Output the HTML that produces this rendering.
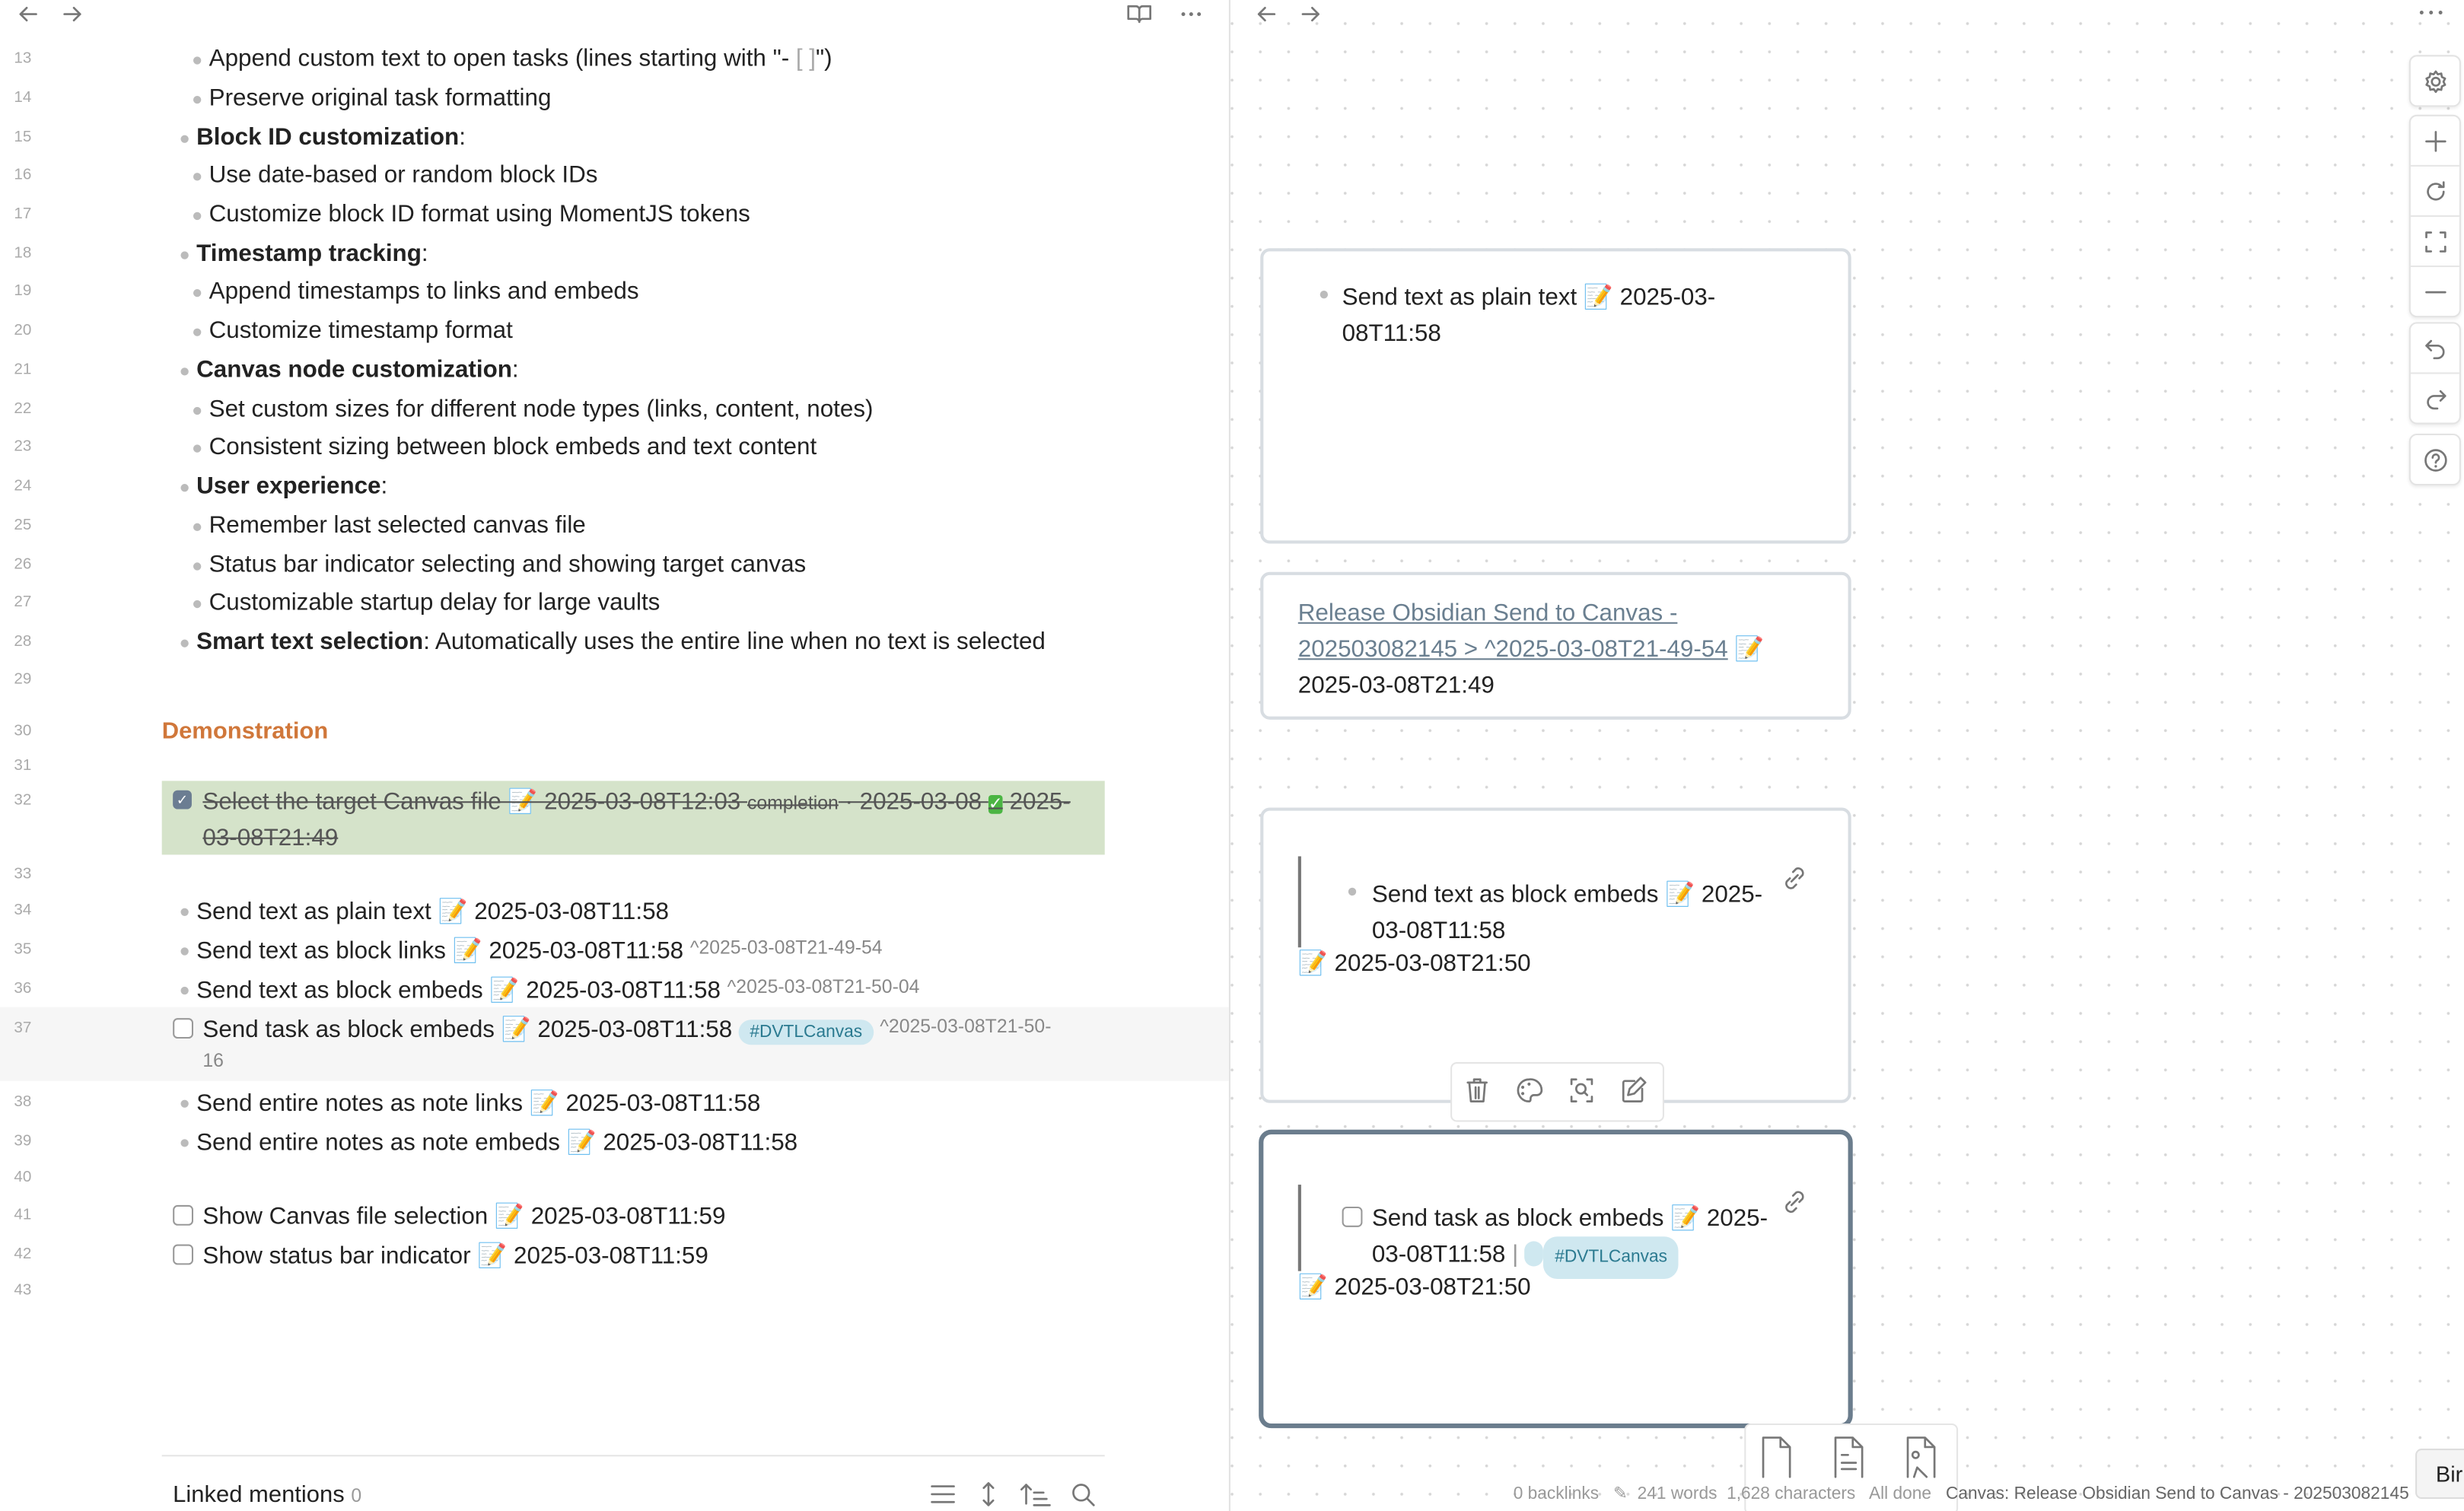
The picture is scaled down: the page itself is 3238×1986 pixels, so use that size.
<!DOCTYPE html>
<html><head><meta charset="utf-8"><style>
html,body{margin:0;padding:0;width:3238px;height:1986px;overflow:hidden;background:#fff}
#s{width:1568px;height:962px;transform:scale(2.0651);transform-origin:0 0;position:relative;font-family:"Liberation Sans",sans-serif;color:#222}
.ab{position:absolute}
.ln{position:absolute;left:0;width:20px;text-align:right;font-size:10px;color:#aaa}
.t{position:absolute;font-size:15.2px;white-space:nowrap;margin-top:1px}
.b{position:absolute;width:5px;height:5px;border-radius:50%;background:#bbb;margin-top:1px}
.cb{position:absolute;width:11px;height:11px;border:1px solid #999;border-radius:3px;background:#fff}
.ic{stroke:#777;fill:none;stroke-width:1.3;stroke-linecap:round;stroke-linejoin:round}
.card{position:absolute;background:#fff;border:2px solid #d8dde2;border-radius:6px;box-sizing:border-box}
.tag{display:inline-block;background:#cfe8f0;color:#2b7a90;border-radius:9px;font-size:11px;padding:2px 7px}
.sm{color:#888;font-size:12px}
.tb{position:absolute;left:1533px;width:31px;background:#fff;border:1px solid #e3e3e3;border-radius:5px;box-shadow:0 1px 2px rgba(0,0,0,.08)}
.tb div{height:31px;border-bottom:1px solid #e6e6e6;display:flex;align-items:center;justify-content:center}
.tb div:last-child{border-bottom:none}
</style></head><body><div id="s">
<div class="ab" style="left:0;top:0;width:782px;height:962px;background:#fff"></div>
<div class="ab" style="left:782px;top:0;width:1px;height:962px;background:#e2e2e2"></div>
<svg class="ab" style="left:10px;top:2px" width="44" height="14"><path class="ic" d="M13 7H3M7 3L3 7l4 4"/><path class="ic" d="M31 7h10M37 3l4 4-4 4" stroke="#bbb"/></svg>
<svg class="ab" style="left:716px;top:1px" width="60" height="15"><path class="ic" d="M2 3h5c1 0 2 1 2 2v8c0-1-1-2-2-2H2zM16 3h-5c-1 0-2 1-2 2v8c0-1 1-2 2-2h5z"/><circle cx="37" cy="8" r="1.2" fill="#777"/><circle cx="42" cy="8" r="1.2" fill="#777"/><circle cx="47" cy="8" r="1.2" fill="#777"/></svg>

<div class="ln" style="top:32px">13</div><div class="b" style="left:123px;top:35px"></div><div class="t" style="left:133px;top:28px">Append custom text to open tasks (lines starting with "- <span style="color:#aaa">[ ]</span>")</div>
<div class="ln" style="top:57px">14</div><div class="b" style="left:123px;top:60px"></div><div class="t" style="left:133px;top:53px">Preserve original task formatting</div>
<div class="ln" style="top:82px">15</div><div class="b" style="left:115px;top:85px"></div><div class="t" style="left:125px;top:78px"><b>Block ID customization</b>:</div>
<div class="ln" style="top:106px">16</div><div class="b" style="left:123px;top:109px"></div><div class="t" style="left:133px;top:102px">Use date-based or random block IDs</div>
<div class="ln" style="top:131px">17</div><div class="b" style="left:123px;top:134px"></div><div class="t" style="left:133px;top:127px">Customize block ID format using MomentJS tokens</div>
<div class="ln" style="top:156px">18</div><div class="b" style="left:115px;top:159px"></div><div class="t" style="left:125px;top:152px"><b>Timestamp tracking</b>:</div>
<div class="ln" style="top:180px">19</div><div class="b" style="left:123px;top:183px"></div><div class="t" style="left:133px;top:176px">Append timestamps to links and embeds</div>
<div class="ln" style="top:205px">20</div><div class="b" style="left:123px;top:208px"></div><div class="t" style="left:133px;top:201px">Customize timestamp format</div>
<div class="ln" style="top:230px">21</div><div class="b" style="left:115px;top:233px"></div><div class="t" style="left:125px;top:226px"><b>Canvas node customization</b>:</div>
<div class="ln" style="top:255px">22</div><div class="b" style="left:123px;top:258px"></div><div class="t" style="left:133px;top:251px">Set custom sizes for different node types (links, content, notes)</div>
<div class="ln" style="top:279px">23</div><div class="b" style="left:123px;top:282px"></div><div class="t" style="left:133px;top:275px">Consistent sizing between block embeds and text content</div>
<div class="ln" style="top:304px">24</div><div class="b" style="left:115px;top:307px"></div><div class="t" style="left:125px;top:300px"><b>User experience</b>:</div>
<div class="ln" style="top:329px">25</div><div class="b" style="left:123px;top:332px"></div><div class="t" style="left:133px;top:325px">Remember last selected canvas file</div>
<div class="ln" style="top:354px">26</div><div class="b" style="left:123px;top:357px"></div><div class="t" style="left:133px;top:350px">Status bar indicator selecting and showing target canvas</div>
<div class="ln" style="top:378px">27</div><div class="b" style="left:123px;top:381px"></div><div class="t" style="left:133px;top:374px">Customizable startup delay for large vaults</div>
<div class="ln" style="top:403px">28</div><div class="b" style="left:115px;top:406px"></div><div class="t" style="left:125px;top:399px"><b>Smart text selection</b>: Automatically uses the entire line when no text is selected</div>
<div class="ln" style="top:427px">29</div>
<div class="ln" style="top:460px">30</div><div class="t" style="left:103px;top:456px;color:#d0773a;font-weight:bold;font-size:15px">Demonstration</div>
<div class="ln" style="top:482px">31</div>
<div class="ln" style="top:504px">32</div>
<div class="ab" style="left:103px;top:497px;width:600px;height:47px;background:#d5e3ca"></div>
<div class="ab" style="left:110px;top:503px;width:12px;height:12px;border-radius:3px;background:#6b7d92;color:#fff;font-size:9px;text-align:center;line-height:12px">✓</div>
<div class="t" style="left:129px;top:499px;color:#555;text-decoration:line-through;line-height:22px;white-space:normal;width:574px">Select the target Canvas file 📝 2025-03-08T12:03 <span style="font-size:12px">completion</span> · 2025-03-08 <span style="background:#4bb543;color:#fff;border-radius:2px;font-size:11px">✓</span> 2025-03-08T21:49</div>
<div class="ln" style="top:551px">33</div>
<div class="ln" style="top:574px">34</div><div class="b" style="left:115px;top:577px"></div><div class="t" style="left:125px;top:570px">Send text as plain text 📝 2025-03-08T11:58</div>
<div class="ln" style="top:599px">35</div><div class="b" style="left:115px;top:602px"></div><div class="t" style="left:125px;top:595px">Send text as block links 📝 2025-03-08T11:58 <span class="sm" style="vertical-align:3px">^2025-03-08T21-49-54</span></div>
<div class="ln" style="top:624px">36</div><div class="b" style="left:115px;top:627px"></div><div class="t" style="left:125px;top:620px">Send text as block embeds 📝 2025-03-08T11:58 <span class="sm" style="vertical-align:3px">^2025-03-08T21-50-04</span></div>
<div class="ab" style="left:0;top:641px;width:782px;height:47px;background:#f6f6f6"></div>
<div class="ln" style="top:649px">37</div><div class="cb" style="left:110px;top:648px"></div><div class="t" style="left:129px;top:645px">Send task as block embeds 📝 2025-03-08T11:58 <span class="tag">#DVTLCanvas</span> <span class="sm" style="vertical-align:3px">^2025-03-08T21-50-</span></div>
<div class="t sm" style="left:129px;top:667px">16</div>
<div class="ln" style="top:696px">38</div><div class="b" style="left:115px;top:699px"></div><div class="t" style="left:125px;top:692px">Send entire notes as note links 📝 2025-03-08T11:58</div>
<div class="ln" style="top:721px">39</div><div class="b" style="left:115px;top:724px"></div><div class="t" style="left:125px;top:717px">Send entire notes as note embeds 📝 2025-03-08T11:58</div>
<div class="ln" style="top:744px">40</div>
<div class="ln" style="top:768px">41</div><div class="cb" style="left:110px;top:767px"></div><div class="t" style="left:129px;top:764px">Show Canvas file selection 📝 2025-03-08T11:59</div>
<div class="ln" style="top:793px">42</div><div class="cb" style="left:110px;top:792px"></div><div class="t" style="left:129px;top:789px">Show status bar indicator 📝 2025-03-08T11:59</div>
<div class="ln" style="top:816px">43</div>
<div class="ab" style="left:103px;top:926px;width:600px;height:1px;background:#e5e5e5"></div>
<div class="t" style="left:110px;top:942px;font-size:15px">Linked mentions <span style="color:#999;font-size:12px">0</span></div>
<svg class="ab" style="left:590px;top:942px" width="110" height="18"><path class="ic" d="M3 4h14M3 9h14M3 14h14"/><path class="ic" d="M39 2v14M36 5l3-3 3 3M36 13l3 3 3-3"/><path class="ic" d="M63 3v12M60 6l3-3 3 3M68 8h6M68 12h8M68 16h10"/><circle class="ic" cx="98" cy="8" r="5"/><path class="ic" d="M102 12l4 4"/></svg>

<div class="ab" style="left:783px;top:0;width:785px;height:962px;background-color:#fff;background-image:radial-gradient(circle,#d6d6d6 0.7px,transparent 1.1px);background-size:18px 18px;background-position:10px 6px"></div>
<svg class="ab" style="left:798px;top:2px" width="44" height="14"><path class="ic" d="M13 7H3M7 3L3 7l4 4" stroke="#bbb"/><path class="ic" d="M31 7h10M37 3l4 4-4 4" stroke="#bbb"/></svg>
<svg class="ab" style="left:1538px;top:2px" width="20" height="12"><circle cx="3" cy="6" r="1.2" fill="#777"/><circle cx="9" cy="6" r="1.2" fill="#777"/><circle cx="15" cy="6" r="1.2" fill="#777"/></svg>

<div class="card" style="left:802px;top:158px;width:376px;height:188px"></div>
<div class="b" style="left:840px;top:184px"></div>
<div class="t" style="left:854px;top:177px;line-height:23px;white-space:normal;width:300px">Send text as plain text 📝 2025-03-<br>08T11:58</div>

<div class="card" style="left:802px;top:364px;width:376px;height:94px"></div>
<div class="t" style="left:826px;top:378px;line-height:23px;white-space:normal;width:340px"><span style="color:#6a7f90;text-decoration:underline">Release Obsidian Send to Canvas -<br>202503082145 &gt; ^2025-03-08T21-49-54</span> 📝<br>2025-03-08T21:49</div>

<div class="card" style="left:802px;top:514px;width:376px;height:188px"></div>
<div class="ab" style="left:826px;top:545px;width:2px;height:58px;background:#777"></div>
<div class="b" style="left:858px;top:564px"></div>
<div class="t" style="left:873px;top:557px;line-height:23px;white-space:normal;width:260px">Send text as block embeds 📝 2025-<br>03-08T11:58</div>
<div class="t" style="left:826px;top:603px">📝 2025-03-08T21:50</div>
<svg class="ab" style="left:1134px;top:551px" width="16" height="16"><path class="ic" stroke="#bbb" d="M6 10l4-4M7 4l2-2a3 3 0 014 4l-2 2M9 12l-2 2a3 3 0 01-4-4l2-2"/></svg>
<div class="ab" style="left:923px;top:676px;width:134px;height:36px;background:#fff;border:1px solid #e5e5e5;border-radius:4px"></div>
<svg class="ab" style="left:930px;top:684px" width="120" height="20"><path class="ic" d="M4 5h12M8 5V3h4v2M5 5l1 12h8l1-12M9 8v7M11 8v7"/><path class="ic" d="M43 3a7 7 0 100 14c1 0 1-1 1-2s1-2 2-2h2a3 3 0 003-3 7 7 0 00-8-7z"/><circle cx="39" cy="8" r="1" fill="#777"/><circle cx="43" cy="6" r="1" fill="#777"/><circle cx="39" cy="12" r="1" fill="#777"/><path class="ic" d="M70 6V3h3M80 3h3v3M83 14v3h-3M73 17h-3v-3"/><circle class="ic" cx="76" cy="9" r="3"/><path class="ic" d="M78 11l2 2"/><path class="ic" d="M115 9v7a1 1 0 01-1 1h-10a1 1 0 01-1-1V5a1 1 0 011-1h6M106 13l1-4 7-7 3 3-7 7z"/></svg>

<div class="card" style="left:801px;top:719px;width:378px;height:190px;border:3px solid #6b7d8d;border-radius:8px"></div>
<div class="ab" style="left:826px;top:754px;width:2px;height:55px;background:#777"></div>
<div class="cb" style="left:854px;top:768px"></div>
<div class="t" style="left:873px;top:763px;line-height:23px;white-space:normal;width:270px">Send task as block embeds 📝 2025-<br>03-08T11:58 <span style="color:#999">|</span> <span style="display:inline-block;width:12px;height:16px;background:#cfe8f0;border-radius:6px;vertical-align:-3px"></span><span class="tag">#DVTLCanvas</span></div>
<div class="t" style="left:826px;top:809px">📝 2025-03-08T21:50</div>
<svg class="ab" style="left:1134px;top:757px" width="16" height="16"><path class="ic" stroke="#bbb" d="M6 10l4-4M7 4l2-2a3 3 0 014 4l-2 2M9 12l-2 2a3 3 0 01-4-4l2-2"/></svg>
<div class="ab" style="left:1110px;top:906px;width:134px;height:56px;background:#fff;border:1px solid #e5e5e5;border-radius:4px"></div>
<svg class="ab" style="left:1118px;top:912px" width="120" height="30"><path class="ic" d="M4 28V3h11l6 6v19M15 3v6h6"/><path class="ic" d="M50 28V3h11l6 6v19M61 3v6h6M54 14h4M54 19h9M54 23h9"/><path class="ic" d="M96 28V3h11l6 6v19M107 3v6h6"/><circle class="ic" cx="101" cy="14" r="2"/><path class="ic" d="M100 28l2-6 6 6"/></svg>

<div class="tb" style="top:35px"><div><svg width="16" height="16"><circle class="ic" cx="8" cy="8" r="2.5"/><path class="ic" d="M8 1.5l1.3 1.8 2.2-.5.4 2.2 2 1-1 2 1 2-2 1-.4 2.2-2.2-.5L8 14.5l-1.3-1.8-2.2.5-.4-2.2-2-1 1-2-1-2 2-1 .4-2.2 2.2.5z"/></svg></div></div>
<div class="tb" style="top:73px"><div><svg width="14" height="14"><path class="ic" d="M7 1v12M1 7h12"/></svg></div><div><svg width="14" height="14"><path class="ic" d="M12 7a5 5 0 11-1.5-3.6M12 1v3h-3"/></svg></div><div><svg width="14" height="14"><path class="ic" d="M1 4V1h3M10 1h3v3M13 10v3h-3M4 13H1v-3"/></svg></div><div><svg width="14" height="14"><path class="ic" d="M1 7h12"/></svg></div></div>
<div class="tb" style="top:205px"><div><svg width="14" height="14"><path class="ic" d="M4 2L1 5l3 3M1 5h7a4 4 0 010 8H6"/></svg></div><div><svg width="14" height="14"><path class="ic" stroke="#bbb" d="M10 2l3 3-3 3M13 5H6a4 4 0 000 8h2"/></svg></div></div>
<div class="tb" style="top:276px"><div><svg width="16" height="16"><circle class="ic" cx="8" cy="8" r="6.5"/><path class="ic" d="M6 6.3a2 2 0 113 1.7c-.7.4-1 .8-1 1.5"/><circle cx="8" cy="11.8" r=".8" fill="#777"/></svg></div></div>

<div class="ab" style="left:1537px;top:922px;width:40px;height:30px;background:#f4f4f4;border:1px solid #ddd;border-radius:4px;font-size:14px;line-height:30px;padding-left:12px">Bir</div>
<div class="ab" style="left:963px;top:944px;font-size:11px;color:#999;white-space:nowrap">0 backlinks &nbsp; ✎ &nbsp;241 words &nbsp;1,628 characters &nbsp; All done &nbsp; <span style="color:#666">Canvas: Release Obsidian Send to Canvas - 202503082145</span></div>
</div></body></html>
